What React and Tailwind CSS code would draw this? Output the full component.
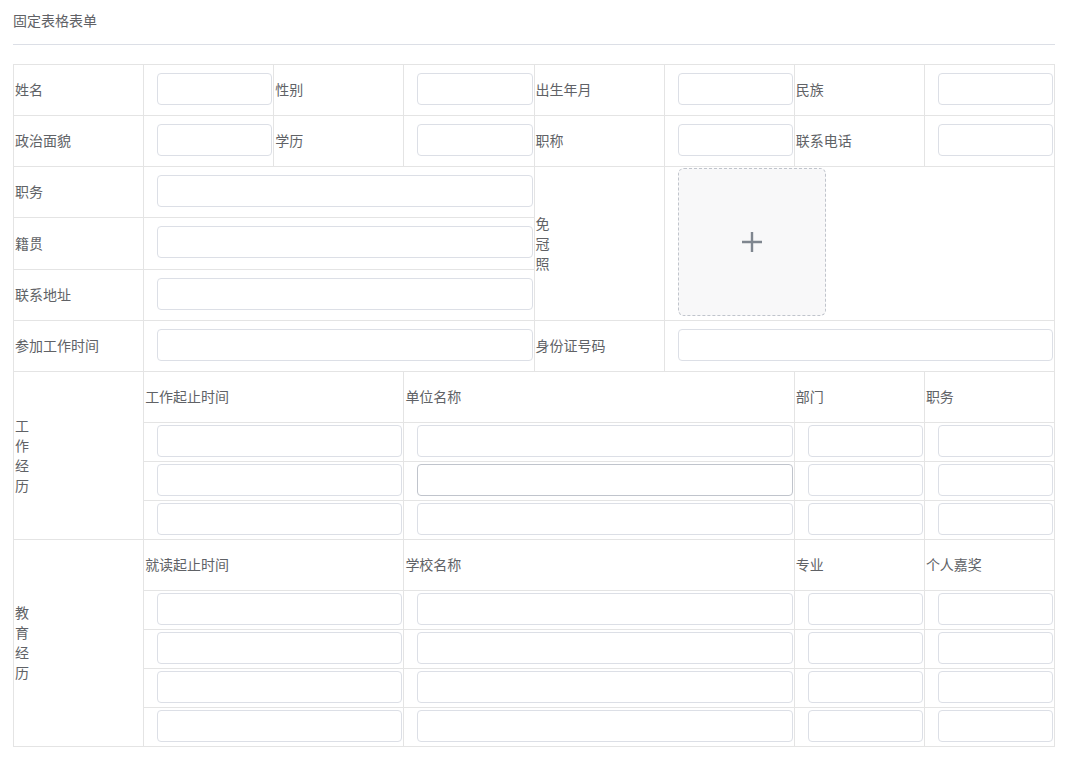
const font = { fontFamily: '"Noto Sans CJK SC", "Liberation Sans", sans-serif' };

const Field = ({ hover }) => (
  <input
    type="text"
    className={`block w-full h-8 rounded border bg-white px-[15px] text-sm outline-none ${
      hover ? 'border-[#c0c4cc]' : 'border-[#dcdfe6]'
    }`}
  />
);

const InputCell = ({ span = 1, tall = true, hover }) => (
  <td
    colSpan={span}
    className={`border border-[#e4e4e4] pl-[13px] pr-px align-top ${tall ? 'pt-[8px] pb-[10px]' : 'pt-[2px] pb-[4px]'}`}
  >
    <Field hover={hover} />
  </td>
);

const Label = ({ children, span = 1, rows = 1 }) => (
  <td colSpan={span} rowSpan={rows} className="border border-[#e4e4e4] pl-[1px] pb-[2px] align-middle text-sm text-[#606266]">
    {children}
  </td>
);

const Vertical = ({ text, rows }) => (
  <td rowSpan={rows} className="border border-[#e4e4e4] pl-[1px] pb-[2px] align-middle text-sm leading-5 text-[#606266]">
    {text.split('').map((c) => (
      <div key={c}>{c}</div>
    ))}
  </td>
);

export default function App() {
  const work = [0, 1, 2];
  const edu = [0, 1, 2, 3];

  return (
    <div className="min-h-screen bg-white px-[13px] pt-[10px]" style={font}>
      <div className="text-sm leading-5 text-[#606266]">固定表格表单</div>
      <div className="mt-[14px] mb-[19px] h-px bg-[#dcdfe6]" />

      <table className="w-full table-fixed border-collapse">
        <colgroup>
          {[0, 1, 2, 3, 4, 5, 6, 7].map((i) => (
            <col key={i} className="w-[12.5%]" />
          ))}
        </colgroup>
        <tbody>
          <tr className="h-[51px]">
            <Label>姓名</Label>
            <InputCell />
            <Label>性别</Label>
            <InputCell />
            <Label>出生年月</Label>
            <InputCell />
            <Label>民族</Label>
            <InputCell />
          </tr>
          <tr className="h-[51px]">
            <Label>政治面貌</Label>
            <InputCell />
            <Label>学历</Label>
            <InputCell />
            <Label>职称</Label>
            <InputCell />
            <Label>联系电话</Label>
            <InputCell />
          </tr>
          <tr className="h-[51px]">
            <Label>职务</Label>
            <InputCell span={3} />
            <Vertical text="免冠照" rows={3} />
            <td colSpan={3} rowSpan={3} className="border border-[#e4e4e4] pl-[13px] pt-px pb-[3px] align-top">
              <div className="flex h-[148px] w-[148px] items-center justify-center rounded-md border border-dashed border-[#c0c4cc] bg-[#f8f8f9]">
                <svg width="20" height="20" viewBox="0 0 20 20">
                  <path d="M10 0v20M0 10h20" stroke="#7f868f" strokeWidth="2.4" />
                </svg>
              </div>
            </td>
          </tr>
          <tr className="h-[52px]">
            <Label>籍贯</Label>
            <InputCell span={3} />
          </tr>
          <tr className="h-[51px]">
            <Label>联系地址</Label>
            <InputCell span={3} />
          </tr>
          <tr className="h-[51px]">
            <Label>参加工作时间</Label>
            <InputCell span={3} />
            <Label>身份证号码</Label>
            <InputCell span={3} />
          </tr>

          <tr className="h-[51px]">
            <Vertical text="工作经历" rows={4} />
            <Label span={2}>工作起止时间</Label>
            <Label span={3}>单位名称</Label>
            <Label>部门</Label>
            <Label>职务</Label>
          </tr>
          {work.map((i) => (
            <tr key={`w${i}`} className="h-[39px]">
              <InputCell span={2} tall={false} />
              <InputCell span={3} tall={false} hover={i === 1} />
              <InputCell tall={false} />
              <InputCell tall={false} />
            </tr>
          ))}

          <tr className="h-[51px]">
            <Vertical text="教育经历" rows={5} />
            <Label span={2}>就读起止时间</Label>
            <Label span={3}>学校名称</Label>
            <Label>专业</Label>
            <Label>个人嘉奖</Label>
          </tr>
          {edu.map((i) => (
            <tr key={`e${i}`} className="h-[39px]">
              <InputCell span={2} tall={false} />
              <InputCell span={3} tall={false} />
              <InputCell tall={false} />
              <InputCell tall={false} />
            </tr>
          ))}
        </tbody>
      </table>
    </div>
  );
}
